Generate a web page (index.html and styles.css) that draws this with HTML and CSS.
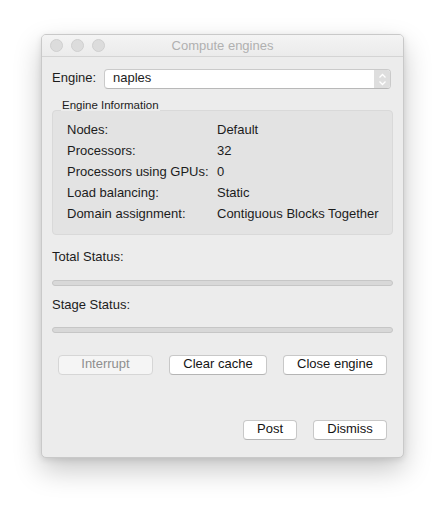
FILE: index.html
```html
<!DOCTYPE html>
<html>
<head>
<meta charset="utf-8">
<link rel="stylesheet" href="styles.css">
</head>
<body>
<div class="window">
  <div class="titlebar">
    <div class="lights"><span class="light"></span><span class="light"></span><span class="light"></span></div>
    <div class="title">Compute engines</div>
    <div></div>
  </div>
  <div class="content">
    <div class="engine-row">
      <span class="label">Engine:</span>
      <div class="select">
        <span class="select-text">naples</span>
        <span class="stepper">
          <svg width="9" height="13" viewBox="0 0 9 13"><path d="M1.5 4.5 L4.5 1.5 L7.5 4.5 M1.5 8.5 L4.5 11.5 L7.5 8.5" fill="none" stroke="#ffffff" stroke-width="1.3"/></svg>
        </span>
      </div>
    </div>
    <div class="group-title">Engine Information</div>
    <div class="group">
      <div class="row"><span class="k">Nodes:</span><span class="v">Default</span></div>
      <div class="row"><span class="k">Processors:</span><span class="v">32</span></div>
      <div class="row"><span class="k">Processors using GPUs:</span><span class="v">0</span></div>
      <div class="row"><span class="k">Load balancing:</span><span class="v">Static</span></div>
      <div class="row"><span class="k">Domain assignment:</span><span class="v">Contiguous Blocks Together</span></div>
    </div>
    <div class="status-label first">Total Status:</div>
    <div class="progress first-bar"></div>
    <div class="status-label">Stage Status:</div>
    <div class="progress second-bar"></div>
    <div class="actions">
      <button class="btn disabled w-interrupt">Interrupt</button>
      <button class="btn w-clear">Clear cache</button>
      <button class="btn w-close">Close engine</button>
    </div>
    <div class="footer">
      <button class="btn w-post">Post</button>
      <button class="btn w-dismiss">Dismiss</button>
    </div>
  </div>
</div>
</body>
</html>
```

FILE: styles.css
```css
html, body {
  margin: 0;
  padding: 0;
  background: #ffffff;
}
body {
  font-family: "Liberation Sans", Arial, sans-serif;
  font-size: 13px;
  color: #1c1c1c;
  padding: 34px 0 50px 41px;
}
.window {
  width: 363px;
  height: 424px;
  box-sizing: border-box;
  background: #ececec;
  border: 1px solid #c9c9c9;
  border-radius: 5px;
  box-shadow: 0 12px 28px rgba(0,0,0,0.22), 0 2px 6px rgba(0,0,0,0.10);
  display: flex;
  flex-direction: column;
  overflow: hidden;
}
.titlebar {
  height: 21px;
  flex: none;
  display: grid;
  grid-template-columns: 1fr auto 1fr;
  align-items: center;
  background: linear-gradient(#f4f4f4, #ebebeb);
  border-bottom: 1px solid #d4d4d4;
}
.lights {
  display: flex;
  gap: 8px;
  padding-left: 8px;
}
.light {
  width: 11px;
  height: 11px;
  border-radius: 50%;
  background: #dcdcdc;
  border: 0.5px solid #cfcfcf;
}
.title {
  color: #b0b0b0;
  font-size: 13px;
  line-height: 15px;
}
.content {
  flex: 1;
  display: flex;
  flex-direction: column;
  padding: 0 10px 17px 10px;
}
.engine-row {
  display: flex;
  align-items: center;
  margin-top: 12px;
  height: 20px;
  padding-right: 2px;
}
.label {
  width: 52px;
  flex: none;
  line-height: 16px;
  padding-bottom: 2px;
}
.select {
  flex: 1;
  height: 20px;
  box-sizing: border-box;
  background: #ffffff;
  border: 1px solid #cacaca;
  border-bottom-color: #b8b8b8;
  border-radius: 4px;
  display: flex;
  align-items: stretch;
  overflow: hidden;
}
.select-text {
  flex: 1;
  padding-left: 8px;
  line-height: 16px;
}
.stepper {
  width: 16px;
  background: #dedede;
  display: flex;
  align-items: center;
  justify-content: center;
}
.group-title {
  width: fit-content;
  margin: 10px 0 0 9px;
  padding: 0 1px;
  font-size: 11.5px;
  line-height: 12px;
  height: 12px;
  background: #ececec;
  position: relative;
  z-index: 1;
}
.group {
  margin-top: -1px;
  background: #e3e3e3;
  border: 1px solid #d9d9d9;
  border-radius: 4px;
  padding: 8px 0 10px 14px;
}
.row {
  display: flex;
  line-height: 21px;
  height: 21px;
}
.k {
  width: 150px;
  flex: none;
}
.status-label {
  line-height: 16px;
  margin-top: 11px;
}
.status-label.first {
  margin-top: 14px;
}
.progress {
  height: 6px;
  box-sizing: border-box;
  background: #d8d8d8;
  border: 1px solid #c6c6c6;
  border-radius: 3px;
}
.first-bar { margin-top: 15px; }
.second-bar { margin-top: 14px; }
.actions {
  display: flex;
  gap: 16px;
  margin-top: 22px;
  padding-left: 6px;
}
.footer {
  display: flex;
  gap: 16px;
  margin-top: auto;
  justify-content: flex-end;
  padding-right: 6px;
}
.btn {
  font-family: "Liberation Sans", Arial, sans-serif;
  font-size: 13px;
  color: #141414;
  height: 20px;
  box-sizing: border-box;
  padding: 0 0 2px 0;
  line-height: 16px;
  background: #ffffff;
  border: 1px solid #c8c8c8;
  border-bottom-color: #b5b5b5;
  border-radius: 4px;
  text-align: center;
  margin: 0;
}
.btn.disabled {
  background: #f5f5f5;
  color: #8e8e8e;
  border-color: #d6d6d6;
}
.w-interrupt { width: 95px; }
.w-clear { width: 98px; }
.w-close { width: 104px; }
.w-post { width: 54px; }
.w-dismiss { width: 74px; }
```
